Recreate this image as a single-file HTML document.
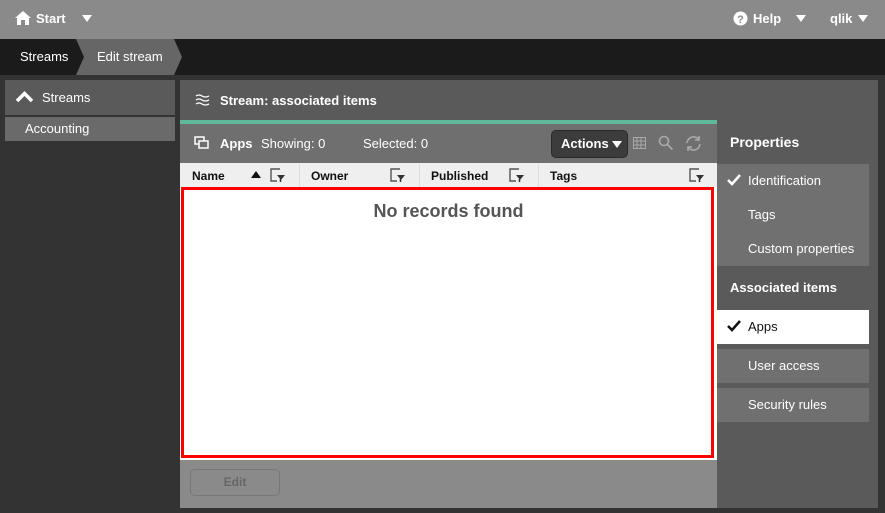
<!DOCTYPE html>
<html><head><style>
*{margin:0;padding:0;box-sizing:border-box}
body{width:885px;height:513px;background:#333;font-family:"Liberation Sans",sans-serif;position:relative;overflow:hidden;color:#fff;font-size:13px}
.a{position:absolute}
.b{font-weight:bold}
</style></head><body>
<div class="a" style="left:0;top:0;width:885px;height:39px;background:#8a8a8a"></div>
<svg class="a" style="left:15px;top:11px" width="16" height="14" viewBox="0 0 16 14"><path d="M8 0L0 7h2v7h4V9h4v5h4V7h2z" fill="#fff"/></svg>
<div class="a b" style="left:36px;top:11px;font-size:13px">Start</div>
<div class="a" style="left:82px;top:15px;border:5px solid transparent;border-top:7px solid #fff;border-bottom:0"></div>
<svg class="a" style="left:733px;top:11px" width="15" height="15"><circle cx="7.5" cy="7.5" r="7" fill="#fff"/><text x="7.5" y="12" font-size="11" font-weight="bold" text-anchor="middle" fill="#8a8a8a" font-family="Liberation Sans">?</text></svg>
<div class="a b" style="left:753px;top:11px">Help</div>
<div class="a" style="left:796px;top:15px;border:5px solid transparent;border-top:7px solid #fff;border-bottom:0"></div>
<div class="a b" style="left:830px;top:11px">qlik</div>
<div class="a" style="left:858px;top:15px;border:5px solid transparent;border-top:7px solid #fff;border-bottom:0"></div>

<div class="a" style="left:0;top:39px;width:885px;height:36px;background:#1b1b1b"></div>
<svg class="a" style="left:76px;top:39px" width="108" height="36"><polygon points="0,0 98,0 106,18 98,36 0,36 8,18" fill="#666"/></svg>
<div class="a" style="left:20px;top:49px">Streams</div>
<div class="a" style="left:97px;top:49px">Edit stream</div>

<div class="a" style="left:5px;top:80px;width:170px;height:35px;background:#5a5a5a"></div>
<svg class="a" style="left:15px;top:91px" width="19" height="12"><path d="M2 10L9.5 2.5 17 10" stroke="#fff" stroke-width="3.5" fill="none"/></svg>
<div class="a" style="left:42px;top:90px">Streams</div>
<div class="a" style="left:5px;top:117px;width:170px;height:24px;background:#6a6a6a"></div>
<div class="a" style="left:25px;top:121px">Accounting</div>

<div class="a" style="left:180px;top:80px;width:698px;height:428px;background:#5a5a5a"></div>
<svg class="a" style="left:195px;top:93px" width="16" height="14" stroke="#fff" fill="none" stroke-width="1.3"><path d="M1 3q3-2 6 0t7 0M1 7q3-2 6 0t7 0M1 11q3-2 6 0t7 0"/></svg>
<div class="a b" style="left:220px;top:93px">Stream: associated items</div>
<div class="a" style="left:180px;top:120px;width:537px;height:4px;background:#5fb89a"></div>
<div class="a" style="left:180px;top:124px;width:537px;height:39px;background:#6f6f6f"></div>
<svg class="a" style="left:194px;top:136px" width="16" height="14" stroke="#fff" fill="none" stroke-width="1.5"><rect x="1" y="1" width="9" height="7"/><rect x="5" y="5" width="9" height="7" fill="#6f6f6f"/></svg>
<div class="a b" style="left:220px;top:136px">Apps</div>
<div class="a" style="left:261px;top:136px">Showing: 0</div>
<div class="a" style="left:363px;top:136px">Selected: 0</div>
<div class="a" style="left:551px;top:130px;width:77px;height:28px;background:#3c3c3c;border:1px solid #2a2a2a;border-radius:5px"></div>
<div class="a b" style="left:561px;top:136px">Actions</div>
<div class="a" style="left:612px;top:141px;border:5px solid transparent;border-top:7px solid #fff;border-bottom:0"></div>
<svg class="a" style="left:633px;top:137px" width="14" height="13"><rect x="0.5" y="0.5" width="12" height="11" fill="none" stroke="#aaa"/><path d="M0 4h13M0 8h13M4 0v12M8 0v12" stroke="#aaa"/></svg>
<svg class="a" style="left:658px;top:135px" width="16" height="16" stroke="#aaa" fill="none" stroke-width="1.6"><circle cx="6" cy="6" r="4.5"/><path d="M9.5 9.5l5 5"/></svg>
<svg class="a" style="left:685px;top:135px" width="17" height="17" stroke="#aaa" fill="none" stroke-width="1.6"><path d="M2 8a6.5 6.5 0 0 1 12-3M15 9a6.5 6.5 0 0 1-12 3"/><path d="M14 1v4h-4M3 16v-4h4"/></svg>

<div class="a" style="left:180px;top:163px;width:537px;height:24px;background:#efefef"></div>
<div class="a" style="left:299px;top:164px;width:1px;height:23px;background:#ddd"></div>
<div class="a" style="left:419px;top:164px;width:1px;height:23px;background:#ddd"></div>
<div class="a" style="left:538px;top:164px;width:1px;height:23px;background:#ddd"></div>
<div class="a b" style="left:192px;top:169px;color:#111;font-size:12px">Name</div>
<div class="a b" style="left:311px;top:169px;color:#111;font-size:12px">Owner</div>
<div class="a b" style="left:431px;top:169px;color:#111;font-size:12px">Published</div>
<div class="a b" style="left:550px;top:169px;color:#111;font-size:12px">Tags</div>
<div class="a" style="left:251px;top:171px;border:5px solid transparent;border-bottom:7px solid #111;border-top:0"></div>
<svg class="a" style="left:270px;top:168px" width="16" height="15"><path d="M10 1H1v12h6" stroke="#555" fill="none" stroke-width="1.4"/><path d="M7 7h8l-4 5z" fill="#333"/><path d="M10.5 11v3" stroke="#333" stroke-width="1.5"/></svg>
<svg class="a" style="left:390px;top:168px" width="16" height="15"><path d="M10 1H1v12h6" stroke="#555" fill="none" stroke-width="1.4"/><path d="M7 7h8l-4 5z" fill="#333"/><path d="M10.5 11v3" stroke="#333" stroke-width="1.5"/></svg>
<svg class="a" style="left:509px;top:168px" width="16" height="15"><path d="M10 1H1v12h6" stroke="#555" fill="none" stroke-width="1.4"/><path d="M7 7h8l-4 5z" fill="#333"/><path d="M10.5 11v3" stroke="#333" stroke-width="1.5"/></svg>
<svg class="a" style="left:689px;top:168px" width="16" height="15"><path d="M10 1H1v12h6" stroke="#555" fill="none" stroke-width="1.4"/><path d="M7 7h8l-4 5z" fill="#333"/><path d="M10.5 11v3" stroke="#333" stroke-width="1.5"/></svg>

<div class="a" style="left:180px;top:187px;width:537px;height:273px;background:#fff"></div>
<div class="a" style="left:181px;top:187px;width:533px;height:271px;border:3px solid #f00"></div>
<div class="a b" style="left:180px;top:201px;width:537px;text-align:center;color:#555;font-size:18px">No records found</div>
<div class="a" style="left:180px;top:460px;width:537px;height:48px;background:#8a8a8a"></div>
<div class="a b" style="left:190px;top:469px;width:90px;height:27px;border:1px solid #777;border-radius:5px;text-align:center;line-height:25px;color:#666;font-size:12px">Edit</div>

<div class="a b" style="left:730px;top:134px;font-size:14px">Properties</div>
<div class="a" style="left:717px;top:164px;width:152px;height:102px;background:#707070"></div>
<svg class="a" style="left:727px;top:174px" width="14" height="12"><path d="M1 6l4 4 8-9" stroke="#fff" stroke-width="2.5" fill="none"/></svg>
<div class="a" style="left:748px;top:173px">Identification</div>
<div class="a" style="left:748px;top:207px">Tags</div>
<div class="a" style="left:748px;top:241px">Custom properties</div>
<div class="a b" style="left:730px;top:280px">Associated items</div>
<div class="a" style="left:717px;top:310px;width:152px;height:34px;background:#fff"></div>
<svg class="a" style="left:727px;top:320px" width="14" height="12"><path d="M1 6l4 4 8-9" stroke="#111" stroke-width="2.5" fill="none"/></svg>
<div class="a" style="left:748px;top:319px;color:#111">Apps</div>
<div class="a" style="left:717px;top:349px;width:152px;height:34px;background:#707070"></div>
<div class="a" style="left:748px;top:358px">User access</div>
<div class="a" style="left:717px;top:388px;width:152px;height:34px;background:#707070"></div>
<div class="a" style="left:748px;top:397px">Security rules</div>
</body></html>
